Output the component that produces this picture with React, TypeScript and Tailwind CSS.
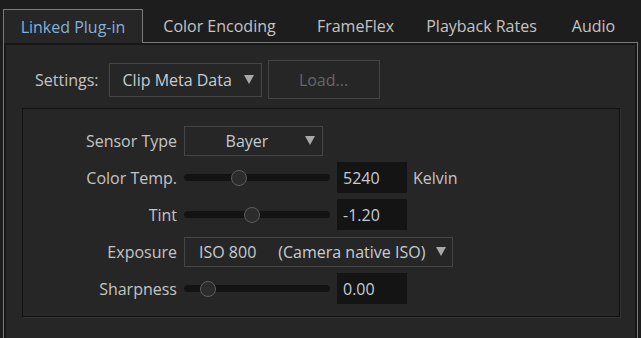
import React from 'react';

const tabs = [
  { name: 'Linked Plug-in', w: 'w-[140px]' },
  { name: 'Color Encoding', w: 'w-[153px]' },
  { name: 'FrameFlex', w: 'w-[119px]' },
  { name: 'Playback Rates', w: 'w-[133px]' },
  { name: 'Audio', w: 'w-[91px]' },
];

function Arrow() {
  return (
    <svg width="10" height="9" viewBox="0 0 10 9" className="shrink-0">
      <path d="M0 0 H10 L5 9 Z" fill="#a8a8a8" />
    </svg>
  );
}

function Slider({ pos }: { pos: number }) {
  return (
    <div className="relative w-[146px] h-[16px] flex items-center">
      <div className="w-full h-[7px] rounded-full bg-[#131313]" />
      <div
        className="absolute top-0 w-[16px] h-[16px] rounded-full border-[1.5px] border-[#5e5e5e] bg-[#2c2c2c]"
        style={{ left: pos - 8 }}
      />
    </div>
  );
}

function ValueBox({ value }: { value: string }) {
  return (
    <div className="w-[70px] h-[31px] bg-[#141414] flex items-center pl-[6px] text-[#c3ccd6]">
      {value}
    </div>
  );
}

function Row({ label, children }: { label: string; children: React.ReactNode }) {
  return (
    <div className="flex items-center h-[37px] gap-[7px]">
      <div className="w-[154px] text-right">{label}</div>
      {children}
    </div>
  );
}

export default function App() {
  return (
    <div className="w-[641px] h-[338px] overflow-hidden bg-[#1d1d1d] text-[16px] text-[#c4c4c4] font-['Open_Sans',sans-serif] leading-none">
      <div className="flex items-end h-[42px] pl-[3px]">
        {tabs.map((t, i) =>
          i === 0 ? (
            <div
              key={t.name}
              className={`${t.w} relative z-10 h-[34px] -mb-px pt-px flex items-center justify-center border-l border-t border-r border-[#7a7a7a] bg-[#262626] text-[#80b2dc]`}
            >
              {t.name}
            </div>
          ) : (
            <div key={t.name} className={`${t.w} h-[33px] pt-px flex items-center justify-center`}>
              {t.name}
            </div>
          )
        )}
      </div>

      <div className="mx-[3px] h-[320px] border border-[#7a7a7a] bg-[#262626]">
        <div className="h-full border-2 border-[#171717] pt-[15px] pl-[29px] pr-[15px]">
          <div className="flex items-center h-[39px]">
            <span>Settings:</span>
            <div className="ml-[10px] w-[153px] h-[34px] border border-[#454545] flex items-center justify-between pl-[13px] pr-[7px] text-[#c6cdd4]">
              <span>Clip Meta Data</span>
              <Arrow />
            </div>
            <div className="ml-[6px] w-[112px] h-[39px] border border-[#444] flex items-center justify-center text-[#676767]">
              Load...
            </div>
          </div>

          <div className="mt-[9px] -ml-[13px] h-[209px] border border-[#111] shadow-[1px_1px_0_#333] pt-[13px]">
            <Row label="Sensor Type">
              <div className="w-[139px] h-[30px] border border-[#454545] flex items-center pr-[7px] text-[#c0cad4]">
                <span className="flex-1 text-center pl-[4px]">Bayer</span>
                <Arrow />
              </div>
            </Row>
            <Row label="Color Temp.">
              <Slider pos={55} />
              <ValueBox value="5240" />
              <span className="ml-[-1px]">Kelvin</span>
            </Row>
            <Row label="Tint">
              <Slider pos={68} />
              <ValueBox value="-1.20" />
            </Row>
            <Row label="Exposure">
              <div className="w-[269px] h-[30px] border border-[#454545] flex items-center pl-[14px] pr-[6px] text-[#c6cdd4]">
                <span>ISO 800</span>
                <span className="ml-[22px] flex-1">(Camera native ISO)</span>
                <Arrow />
              </div>
            </Row>
            <Row label="Sharpness">
              <Slider pos={24} />
              <ValueBox value="0.00" />
            </Row>
          </div>
        </div>
      </div>
    </div>
  );
}
